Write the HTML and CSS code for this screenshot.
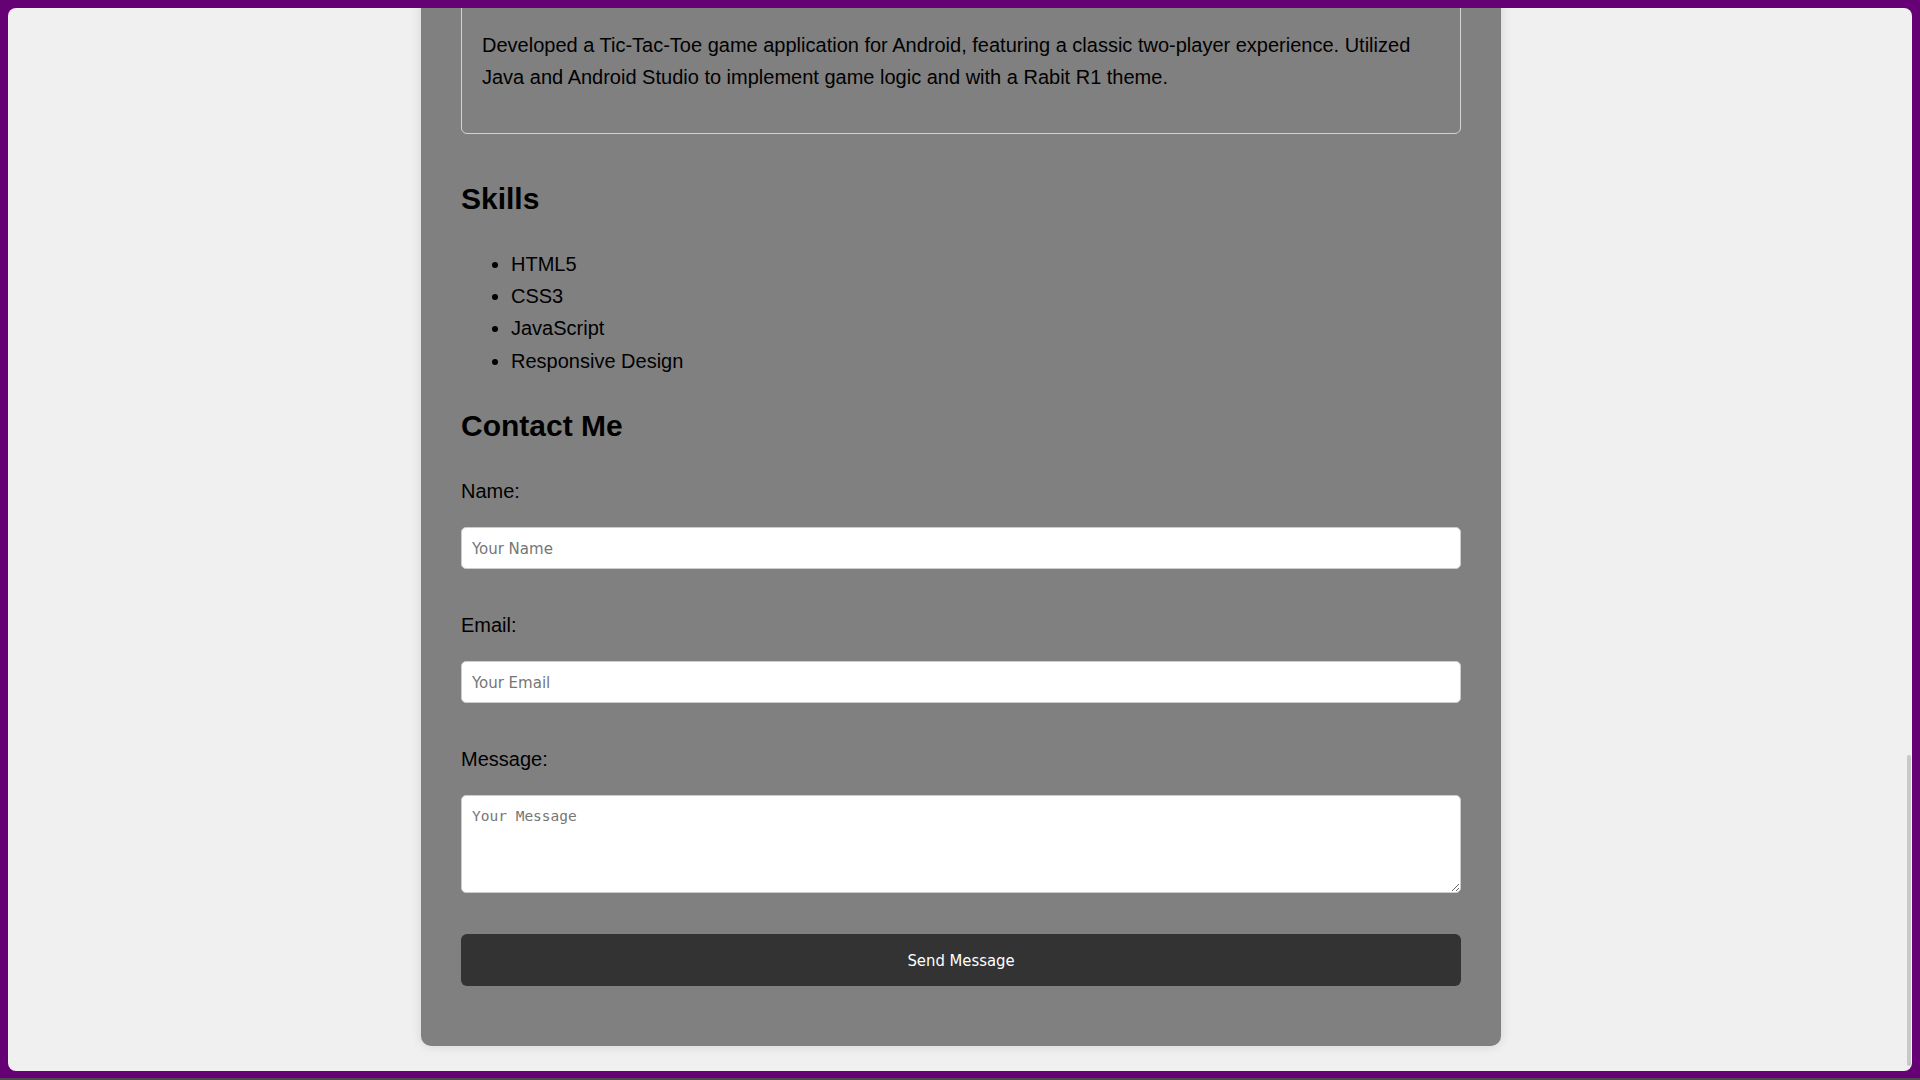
FILE: index.html
```html
<!DOCTYPE html>
<html lang="en">
<head>
<meta charset="utf-8">
<title>Portfolio</title>
<link rel="stylesheet" href="styles.css">
</head>
<body>
<div class="window">
  <main class="card">
    <section class="project">
      <p>Developed a Tic-Tac-Toe game application for Android, featuring a classic two-player experience. Utilized Java and Android Studio to implement game logic and with a Rabit R1 theme.</p>
    </section>

    <h2 class="skills-title">Skills</h2>
    <ul class="skills">
      <li>HTML5</li>
      <li>CSS3</li>
      <li>JavaScript</li>
      <li>Responsive Design</li>
    </ul>

    <h2 class="contact-title">Contact Me</h2>
    <form class="contact">
      <label class="label" for="name">Name:</label>
      <input class="field" type="text" id="name" placeholder="Your Name">
      <label class="label" for="email">Email:</label>
      <input class="field" type="email" id="email" placeholder="Your Email">
      <label class="label" for="message">Message:</label>
      <textarea class="field area" id="message" placeholder="Your Message"></textarea>
      <button class="send" type="button">Send Message</button>
    </form>
  </main>
  <div class="thumb"></div>
</div>
<div class="taskbar"></div>
</body>
</html>
```

FILE: styles.css
```css
html, body {
  margin: 0;
  padding: 0;
}

body {
  background: #650075;
  height: 1080px;
  overflow: hidden;
  font-family: "Liberation Sans", Arial, sans-serif;
  font-size: 20px;
  color: #000;
}

.window {
  position: relative;
  box-sizing: border-box;
  margin: 8px 8px 0 8px;
  padding-left: 2px;
  height: 1063px;
  background: #f0f0f0;
  border-radius: 8px;
  overflow: hidden;
  display: flex;
  flex-direction: column;
  justify-content: flex-end;
}

.taskbar {
  margin-top: 7px;
  height: 2px;
  background: #4b4b4b;
}

.thumb {
  position: absolute;
  right: 1px;
  top: 747px;
  width: 4px;
  height: 311px;
  background: #c8c8c8;
  border-radius: 2px;
}

.card {
  flex: none;
  box-sizing: border-box;
  width: 1080px;
  margin: 0 auto 25px auto;
  padding: 0 40px 60px 40px;
  background: #808080;
  border-radius: 10px;
  box-shadow: 0 0 12px rgba(0, 0, 0, 0.12);
}

.project {
  border: 1px solid #d2d2d2;
  border-radius: 6px;
  padding: 20px;
}

.project p {
  margin: 20px 0;
  line-height: 32px;
}

h2 {
  font-size: 30px;
  line-height: 36px;
  font-weight: bold;
  margin: 0;
}

.skills-title {
  margin-top: 47px;
}

.skills {
  margin: 31px 0 0 0;
  padding-left: 50px;
}

.skills li {
  line-height: 32.3px;
}

.contact-title {
  margin-top: 31px;
}

.contact {
  display: flex;
  flex-direction: column;
  margin-top: 30.5px;
}

.label {
  display: block;
  line-height: 32px;
  margin-bottom: 20.5px;
}

.field {
  display: block;
  box-sizing: border-box;
  width: 100%;
  height: 42px;
  margin: 0 0 39.5px 0;
  padding: 10px;
  border: 1px solid #cccccc;
  border-radius: 5px;
  background: #fff;
  font-family: "DejaVu Sans Condensed", "DejaVu Sans", sans-serif;
  font-size: 16.7px;
  color: #000;
}

.field::placeholder {
  color: #767676;
}

.area {
  height: 98px;
  margin-bottom: 41px;
  font-family: "DejaVu Sans Mono", "Liberation Mono", monospace;
  font-size: 14.5px;
  line-height: 20px;
  resize: vertical;
}

.send {
  display: block;
  width: 100%;
  height: 52px;
  border: none;
  border-radius: 6px;
  background: #333333;
  color: #fff;
  font-family: "DejaVu Sans Condensed", "DejaVu Sans", sans-serif;
  font-size: 16.5px;
  cursor: pointer;
}
```
